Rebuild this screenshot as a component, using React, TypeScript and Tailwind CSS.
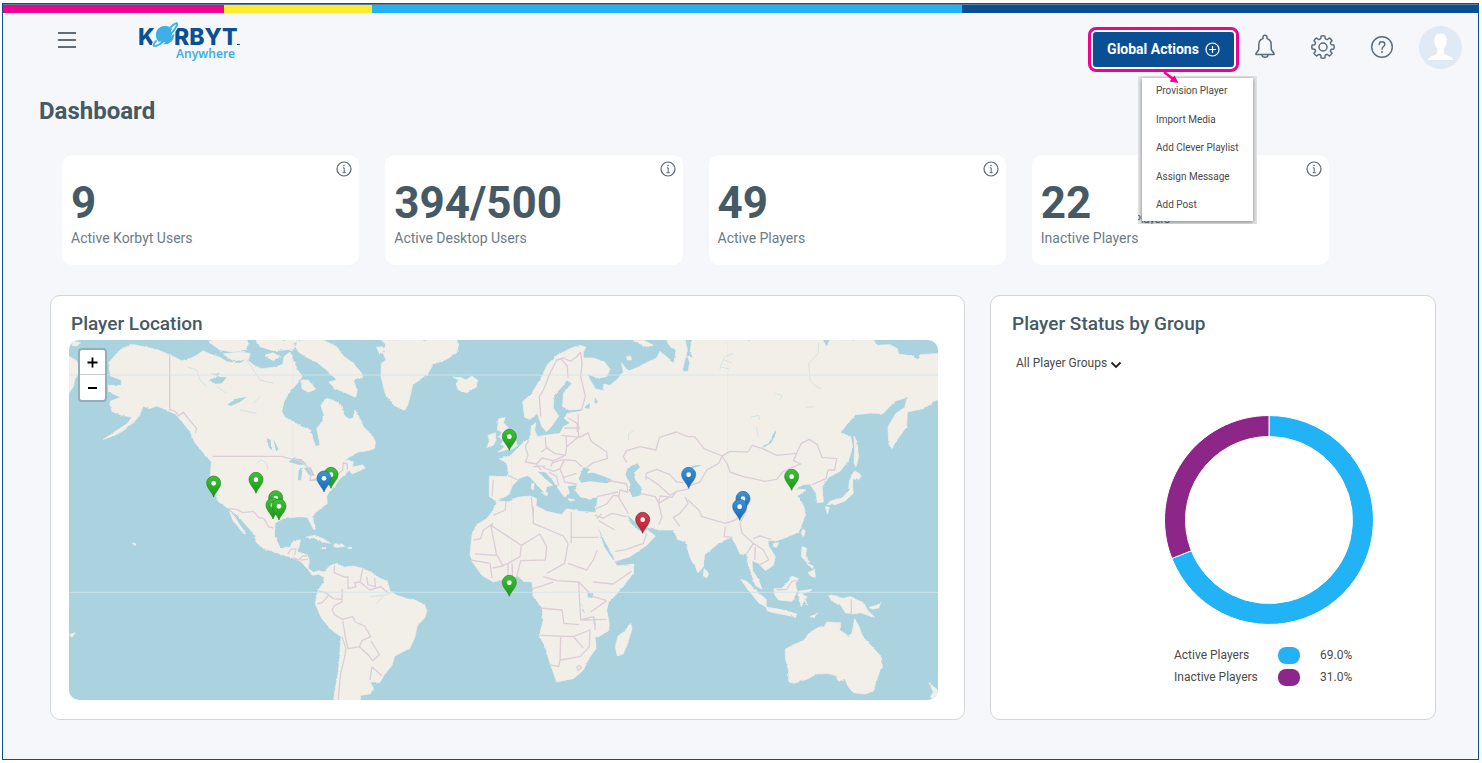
import React from "react";

const ACTIONS = ["Provision Player", "Import Media", "Add Clever Playlist", "Assign Message", "Add Post"];

const STATS = [
  { value: "9", label: "Active Korbyt Users" },
  { value: "394/500", label: "Active Desktop Users" },
  { value: "49", label: "Active Players" },
  { value: "22", label: "Inactive Players" },
];

const GROUPS = [
  { label: "Active Players", share: 69, swatch: "bg-[#22b3f6]", color: "#22b3f6" },
  { label: "Inactive Players", share: 31, swatch: "bg-[#8d2689]", color: "#8d2689" },
];

const PINS: { x: number; y: number; kind: "green" | "blue" | "red" }[] = [
  { x: 461, y: 501, kind: "green" },
  { x: 588, y: 490, kind: "green" },
  { x: 647, y: 545, kind: "green" },
  { x: 639, y: 567, kind: "green" },
  { x: 657, y: 570, kind: "green" },
  { x: 813, y: 475, kind: "green" },
  { x: 792, y: 486, kind: "blue" },
  { x: 1348, y: 361, kind: "green" },
  { x: 1348, y: 799, kind: "green" },
  { x: 1748, y: 610, kind: "red" },
  { x: 1886, y: 475, kind: "blue" },
  { x: 2049, y: 547, kind: "blue" },
  { x: 2039, y: 571, kind: "blue" },
  { x: 2195, y: 481, kind: "green" },
];

const LAND = [
  // North and Central America
  "M145 100L160 82L180 60L215 42L240 48L262 52L300 62L330 75L365 92L395 84L412 74L430 62L450 72L480 82L500 95L540 100L560 88L580 105L605 116L640 112L668 104L672 80L690 66L700 92L712 118L726 140L712 160L690 185L672 215L665 245L675 262L700 276L725 290L752 300L758 325L768 350L780 345L775 318L770 295L788 275L790 248L782 225L800 205L822 212L842 224L852 255L866 268L880 264L885 240L898 262L910 290L936 316L946 335L944 355L925 362L895 366L872 378L850 395L866 390L880 398L876 412L905 405L916 414L895 424L876 432L868 420L856 432L838 448L830 460L822 474L806 486L800 500L802 520L784 534L768 546L757 560L762 580L768 594L760 598L752 580L742 562L720 560L700 562L668 566L645 580L643 618L660 652L690 652L700 632L722 630L712 665L742 675L748 690L744 715L760 727L776 722L790 726L792 742L776 732L758 736L742 716L722 694L692 682L650 668L610 655L588 636L586 616L564 592L545 570L532 556L506 536L476 516L460 476L450 440L455 396L430 368L405 338L388 302L370 280L346 252L320 240L290 228L268 236L250 228L236 262L214 282L190 302L160 318L130 328L160 308L200 282L216 262L184 256L155 244L150 214L182 202L146 186L144 166L184 166L184 150L152 138Z",
  // Arctic archipelago
  "M445 30L455 42L480 60L520 66L556 60L566 40L560 30Z",
  "M490 72L520 92L566 88L570 70L540 66Z",
  "M590 30L600 50L640 62L700 58L716 30Z",
  "M612 76L640 92L660 80L640 68Z",
  "M700 40L730 30L790 30L830 50L850 78L880 100L905 130L908 142L880 152L892 180L886 202L860 190L826 176L806 156L830 150L800 120L770 96L740 82L716 66Z",
  "M724 150L745 150L768 178L744 186L726 176Z",
  // Greenland
  "M965 30L978 44L968 66L978 90L964 100L963 140L975 190L1000 225L1035 242L1045 220L1058 165L1104 130L1120 102L1160 88L1190 68L1196 44L1190 30Z",
  // Iceland
  "M1180 142L1196 150L1188 162L1195 180L1220 188L1248 172L1252 152L1236 138L1218 150L1200 142Z",
  // South America
  "M790 728L810 707L832 700L850 712L880 708L910 716L936 728L960 745L982 754L990 782L1010 796L1040 806L1066 810L1094 826L1101 842L1094 864L1072 886L1065 920L1050 955L1004 978L996 1006L972 1036L960 1057L930 1055L941 1075L930 1092L902 1096L900 1115L820 1115L826 1075L836 1020L843 920L815 900L785 865L766 822L770 796L776 778L792 756Z",
  // British Isles
  "M1316 266L1336 262L1330 278L1342 290L1350 312L1364 332L1372 346L1358 356L1340 360L1316 366L1334 350L1322 342L1334 332L1318 322L1326 306L1312 300Z",
  "M1284 316L1306 308L1308 330L1300 346L1280 352L1288 334Z",
  // Europe and Asia
  "M1560 46L1578 52L1570 66L1570 84L1600 84L1634 96L1650 118L1640 140L1612 144L1584 132L1588 146L1606 176L1628 182L1632 162L1650 166L1672 148L1690 126L1684 98L1704 124L1738 110L1768 94L1790 84L1800 64L1824 84L1842 100L1848 60L1826 44L1820 30L1876 30L1882 60L1872 100L1866 126L1884 124L1890 96L1880 78L1900 84L1890 66L1896 30L2288 30L2300 50L2310 30L2440 30L2450 46L2490 44L2512 56L2516 72L2560 78L2574 90L2580 74L2645 70L2645 200L2590 236L2542 246L2540 290L2512 328L2495 356L2486 340L2484 290L2508 250L2534 232L2542 202L2504 214L2470 250L2430 250L2386 254L2340 308L2372 320L2378 350L2366 390L2340 424L2306 442L2286 470L2288 490L2290 516L2272 518L2268 490L2250 462L2230 464L2204 476L2238 480L2212 498L2232 530L2236 556L2216 606L2180 622L2150 632L2124 632L2126 648L2146 680L2140 706L2116 722L2096 700L2076 692L2078 722L2096 750L2106 778L2086 766L2076 736L2064 700L2060 670L2040 672L2028 644L2014 622L1980 636L1934 674L1930 710L1914 728L1892 686L1876 636L1852 628L1842 600L1800 600L1770 594L1746 586L1722 572L1700 552L1712 580L1740 604L1762 600L1786 618L1760 646L1710 680L1666 694L1650 660L1628 620L1606 574L1608 540L1614 500L1590 508L1560 500L1546 480L1552 464L1522 468L1528 490L1514 502L1496 478L1478 450L1456 426L1432 424L1450 442L1478 466L1460 470L1456 490L1444 478L1420 452L1406 436L1380 444L1358 466L1346 494L1310 514L1288 500L1288 438L1340 440L1346 428L1340 400L1320 386L1350 378L1376 352L1392 336L1412 326L1414 288L1428 278L1424 300L1432 320L1456 316L1500 310L1510 290L1530 280L1512 264L1524 250L1560 244L1574 236L1530 240L1508 230L1510 190L1536 160L1520 150L1508 168L1482 196L1480 234L1496 258L1478 284L1460 306L1446 290L1432 250L1410 268L1394 262L1388 215L1416 190L1444 142L1462 104L1490 76L1530 56Z",
  // Africa
  "M1310 512L1346 516L1372 502L1410 498L1430 506L1428 528L1460 544L1504 554L1520 536L1560 544L1610 548L1606 570L1616 600L1632 650L1652 680L1672 708L1722 702L1720 730L1672 790L1646 816L1640 840L1648 880L1646 902L1606 926L1608 956L1590 980L1570 1020L1540 1046L1490 1056L1470 1000L1456 952L1438 916L1450 870L1446 832L1420 800L1416 756L1392 754L1372 738L1300 756L1266 736L1240 700L1230 674L1236 614L1250 584L1280 566L1300 540Z",
  // Madagascar
  "M1712 880L1716 896L1704 936L1690 972L1672 978L1666 950L1674 918L1694 904Z",
  // Sumatra, Java, Borneo, Sulawesi, Papua
  "M2042 748L2060 754L2090 784L2118 808L2120 832L2096 818L2068 784Z",
  "M2118 832L2160 838L2210 852L2206 860L2150 850L2122 842Z",
  "M2142 776L2164 776L2184 756L2196 738L2216 746L2206 760L2212 784L2196 814L2156 810L2144 794Z",
  "M2216 784L2256 778L2250 784L2226 792L2242 800L2234 806L2244 826L2232 812L2224 830L2218 812Z",
  "M2304 794L2330 798L2346 806L2370 800L2410 818L2424 842L2444 862L2400 848L2380 852L2356 848L2340 822L2318 816Z",
  "M2428 832L2450 826L2462 818L2456 834L2434 838Z",
  "M2250 860L2272 850L2262 862Z",
  // Philippines, Taiwan, Hainan, Sri Lanka
  "M2226 650L2240 654L2236 680L2250 694L2244 700L2224 680Z",
  "M2244 728L2264 718L2266 742L2252 738Z",
  "M2240 700L2260 708L2258 716Z",
  "M2228 598L2236 602L2230 622L2224 610Z",
  "M2140 640L2156 638L2150 652L2140 650Z",
  "M1932 716L1946 728L1940 744L1930 738Z",
  // Japan and Sakhalin
  "M2384 422L2406 436L2394 450L2378 446L2378 470L2380 490L2356 512L2326 524L2302 524L2310 514L2346 504L2366 482L2368 452Z",
  "M2296 530L2308 532L2302 550Z",
  "M2382 318L2390 334L2396 380L2388 410L2382 400L2384 360Z",
  // Australia and New Zealand
  "M2176 958L2200 944L2234 930L2246 910L2276 892L2294 888L2300 876L2342 878L2338 900L2366 918L2376 910L2384 866L2398 892L2408 920L2432 946L2462 978L2464 1010L2450 1050L2440 1084L2414 1092L2380 1088L2366 1072L2354 1046L2336 1054L2326 1036L2300 1030L2270 1032L2240 1048L2202 1060L2186 1054L2186 1024L2176 984Z",
  "M2606 1056L2620 1070L2645 1088L2645 1096L2620 1110L2612 1100L2620 1086Z",
  // Caribbean, Baja California, western edge, small islands
  "M738 622L764 616L790 626L812 640L786 636L764 624Z",
  "M822 642L846 642L856 650L826 652Z",
  "M786 652L798 652L796 656L786 656Z",
  "M864 652L876 652L874 656L864 656Z",
  "M508 544L520 552L536 580L558 612L548 608L530 584L520 574Z",
  "M15 72L50 92L60 120L44 150L40 170L15 206Z",
  "M40 34L62 38L50 48L36 46Z",
  "M220 638L228 642L224 648Z",
  "M28 915L46 908L36 922Z",
  "M1414 462L1422 460L1420 480L1414 476Z",
  "M1444 488L1464 488L1460 498Z",
  "M1524 506L1544 510L1530 514Z",
  "M1700 80L1712 78L1714 90L1702 90Z",
  "M1720 32L1750 30L1780 46L1760 50Z",
  "M950 52L968 50L976 66L958 72Z",
];

const LAKES = [
  "M1570 412L1590 418L1580 430L1600 428L1636 440L1658 452L1640 460L1590 454L1564 458L1556 446Z",
  "M1702 416L1732 400L1740 412L1722 428L1726 450L1744 472L1742 496L1720 502L1706 480L1712 462L1696 436Z",
  "M1580 224L1590 218L1588 236L1574 234Z",
  "M1604 202L1614 216L1606 222Z",
  "M2104 350L2126 340L2146 300L2148 312L2134 338L2112 352Z",
  "M1892 408L1924 404L1924 408L1896 414Z",
  "M686 396L700 384L726 388L740 404L716 404Z",
  "M716 420L728 412L724 446L714 452Z",
  "M732 414L752 412L764 438L748 436Z",
  "M748 452L770 444L772 452Z",
  "M504 222L530 206L560 200L540 216L512 228Z",
  "M450 150L470 140L500 142L486 160L462 162Z",
  "M450 128L466 132L480 128L472 138Z",
  "M620 324L632 330L634 362L626 350Z",
  "M640 328L656 358L648 362Z",
  "M1582 790L1600 790L1598 804L1584 802Z",
  "M1564 816L1570 840L1576 850L1568 844Z",
  "M1602 856L1608 888L1602 886Z",
  "M760 150L768 168L758 166Z",
];

const BORDERS = [
  "M329 75V238L346 244L356 258L370 246L388 270L410 296L406 310",
  "M458 379H664L690 386L720 392L742 410L754 428L750 452L790 440L830 436L848 420L850 398L862 402L862 420",
  "M502 536L530 538L548 548L580 544L596 562L612 566L626 590L640 594",
  "M684 672L692 658L708 656L704 674M700 682L716 690L728 678L742 678M722 690L744 688",
  "M824 706L822 728L856 742L864 740L864 776L888 770L884 758L900 756L930 780L962 770L986 790",
  "M776 782L800 790L806 796L786 818L772 822M806 794L820 806L846 808M846 776L846 816L824 826L816 840L826 856L848 868L878 860L886 876L914 888L932 920L906 932L898 950L864 956L856 920L848 872",
  "M846 920L858 956L852 990L842 1030L834 1112M898 950L926 976L938 992L958 974L950 960L932 932M936 1010L966 1038M936 1010L930 1050M908 716L900 756M920 740L924 764L946 770L944 744",
  "M1562 66L1550 80L1532 94L1510 84L1490 90L1470 130L1450 180L1438 200L1442 260M1502 86L1522 108L1524 144M1562 66L1566 100L1562 140L1576 200L1564 242",
  "M1456 322L1458 350L1466 356M1406 332L1396 350L1404 376L1396 396L1430 402L1446 384L1480 392L1516 376L1520 350L1518 316M1444 366L1460 354L1484 370L1516 376M1504 316L1560 322L1584 308L1594 334L1640 366L1642 386L1600 398L1580 412M1524 264L1552 280L1552 306M1514 294L1560 294M1554 252L1556 320L1520 350M1344 436L1374 450M1300 450L1296 500",
  "M1476 400L1500 390L1520 390L1546 392L1566 410M1448 412L1480 424L1500 416L1510 442L1550 430M1500 416L1512 392M1466 426L1490 440L1496 466M1510 442L1514 456L1550 462M1420 410L1456 408M1430 404L1444 420M1480 392L1472 410",
  "M1640 450L1700 462L1704 486L1680 480L1676 502L1706 552M1608 536L1640 522L1660 496L1676 498M1604 556L1630 564L1656 550L1700 560M1674 486L1610 500",
  "M1700 398L1690 380L1700 362L1740 350L1788 360L1798 322L1850 306L1882 320L1904 320L1932 356L1986 378L2010 364L2064 366L2076 346L2108 356L2150 376L2210 370L2200 392L2222 402L2196 412L2168 426L2150 448L2114 454L2080 446L2050 440L2010 426L2002 402L1986 378L1976 400L1940 420L1920 456L1882 470",
  "M2210 370L2224 340L2248 328L2272 344L2286 382L2330 386L2324 420L2304 420L2298 446L2256 464",
  "M1758 450V430L1790 418L1830 434L1850 456L1870 458M1758 440L1790 460L1830 496L1850 484L1890 476M1850 484L1836 502L1800 498L1796 520L1830 500M1740 490L1786 500L1796 520L1806 562L1796 584M1876 500L1884 520L1858 552L1840 562L1860 590M1884 510L1916 540L1926 560L1996 580L2026 570L2060 540",
  "M1996 590L1992 620L2018 622M2060 540L2040 580L2046 610L2080 640L2060 670M2080 625L2100 618L2134 628M2080 640L2110 660L2126 690L2100 704M2086 650L2084 690",
  "M1616 572L1664 600M1616 622H1534M1534 546V640M1420 530V580L1510 618L1524 640M1384 646L1290 584M1292 584L1310 676L1246 672M1384 646L1380 680L1344 700L1320 710L1298 714M1384 646L1440 612L1460 650L1456 690L1382 692L1370 740M1524 640L1514 700L1460 730M1312 676L1330 710M1344 700V738M1356 700L1358 738M1232 690L1290 700L1296 744M1524 700L1580 720L1600 690L1612 660M1450 740L1490 752L1556 756L1600 800L1640 812M1600 756L1660 762L1714 724M1556 756L1562 870L1600 860L1606 900M1440 834L1506 840L1512 880L1556 884M1440 916L1540 920L1590 900L1588 950L1560 980L1500 990L1496 1010L1466 1004M1502 920L1500 990M1540 920L1570 954M1562 870L1640 868M1416 776L1440 770L1480 756M1592 846L1640 812M1240 630L1262 626L1270 600L1300 580M1550 1012L1558 1006L1564 1014L1554 1022Z",
  "M1300 556L1336 540L1338 516M1414 502L1420 560M1666 664L1700 658L1750 640L1760 610M1610 566L1624 552",
  "M2374 808V852M2150 780L2180 778L2196 754L2210 752",
];

const RIVERS = [
  "M2276 36L2274 70L2246 100L2250 150L2266 168L2284 176",
  "M2020 70L1996 80L1984 100L1980 120M1990 90L2016 98M1986 112L2006 116",
  "M2072 262L2096 256L2098 270M2090 290L2094 320",
  "M380 110L410 120L420 150L440 170",
  "M930 800L980 794L1004 784M950 820L970 798",
  "M1706 330L1706 312L1722 300",
  "M560 90L600 150L640 160M600 200L580 220M540 240L590 250M470 170L500 190",
  "M2144 190L2166 196L2160 210M2236 232L2262 230",
  "M590 400L604 390L620 400L624 420",
];

const PIN_FILL = { green: "url(#pin-green)", blue: "url(#pin-blue)", red: "url(#pin-red)" };
const PIN_STROKE = { green: "#2c7d22", blue: "#2467a3", red: "#6d2a2a" };

function WorldMap() {
  return (
    <svg viewBox="27 30 2607 1080" className="block h-auto w-full" role="img" aria-label="World map with player locations">
      <defs>
        <filter id="coast" x="-5%" y="-5%" width="110%" height="110%">
          <feTurbulence type="fractalNoise" baseFrequency="0.07" numOctaves="2" seed="4" result="n" />
          <feDisplacementMap in="SourceGraphic" in2="n" scale="7" xChannelSelector="R" yChannelSelector="G" />
        </filter>
        <linearGradient id="pin-green" x1="0" y1="0" x2="0" y2="1">
          <stop offset="0" stopColor="#3fc03a" />
          <stop offset="1" stopColor="#169a12" />
        </linearGradient>
        <linearGradient id="pin-blue" x1="0" y1="0" x2="0" y2="1">
          <stop offset="0" stopColor="#4293d2" />
          <stop offset="1" stopColor="#1268bd" />
        </linearGradient>
        <linearGradient id="pin-red" x1="0" y1="0" x2="0" y2="1">
          <stop offset="0" stopColor="#c9405a" />
          <stop offset="1" stopColor="#cc1530" />
        </linearGradient>
      </defs>
      <rect x="27" y="30" width="2607" height="1080" fill="#aad3df" />
      <g filter="url(#coast)">
        <path d={LAND.join("")} fill="#f2efe9" stroke="#f2efe9" strokeWidth="2" strokeLinejoin="round" />
        <path d={LAKES.join("")} fill="#aad3df" />
      </g>
      <path d={RIVERS.join("")} fill="none" stroke="#d3e3e5" strokeWidth="3" strokeLinejoin="round" />
      <path d={BORDERS.join("")} fill="none" stroke="#ddcdd9" strokeWidth="4" strokeLinejoin="round" />
      <path d="M27 135H2634M27 787H2634" stroke="#d2e6ec" strokeOpacity=".8" strokeWidth="3" />
      <path d="M698 30V1110M1355 30V1110M2003 30V1110" stroke="#b4d8e2" strokeOpacity=".25" strokeWidth="2" />
      {PINS.map((p) => (
        <g key={`${p.x}-${p.y}`} transform={`translate(${p.x} ${p.y})`}>
          <path
            d="M0 0C-4 -14 -21 -26 -21 -42A21 21 0 0 1 21 -42C21 -26 4 -14 0 0Z"
            fill={PIN_FILL[p.kind]}
            stroke={PIN_STROKE[p.kind]}
            strokeWidth="2"
          />
          <circle cy="-41" r="7" fill="#fff" />
        </g>
      ))}
    </svg>
  );
}

function Logo() {
  return (
    <svg width="104" height="40" viewBox="0 0 104 40" role="img" aria-label="Korbyt Anywhere">
      <g fontFamily="Inter, sans-serif" fontWeight="800" fontSize="23" fill="#0b5094">
        <text x="-1" y="24">K</text>
        <text x="35" y="24">RBYT</text>
      </g>
      <circle cx="26" cy="14" r="9.200" fill="#3fb0e6" />
      <path d="M32 6C36 2 39 1 38 4C36 9 28 18 21 23C14 27 13 25 17 20" fill="none" stroke="#f5f7fb" strokeWidth="4" />
      <circle cx="25" cy="13.500" r="7.800" fill="#3fb0e6" />
      <path d="M32 6C36 2 39 1 38 4C36 9 28 18 21 23C14 27 13 25 17 20" fill="none" stroke="#3fb0e6" strokeWidth="2" strokeLinecap="round" />
      <path d="M98 23.500h3" stroke="#0b5094" strokeWidth="1" />
      <text x="37" y="37" fontFamily="'Noto Sans', sans-serif" fontWeight="600" fontSize="12" fill="#3fb0e6">Anywhere</text>
    </svg>
  );
}

function InfoIcon() {
  return (
    <svg width="16" height="16" viewBox="0 0 16 16" fill="none" stroke="#566573" strokeWidth="1.200">
      <circle cx="8" cy="8" r="7" />
      <path d="M6.800 6.800H8.200V11.500M6.600 11.700H9.800" strokeWidth="1" />
      <circle cx="8" cy="4.500" r=".8" fill="#566573" stroke="none" />
    </svg>
  );
}

function BellIcon() {
  return (
    <svg width="22" height="26" viewBox="0 0 22 26" fill="none" stroke="#5a6b7b" strokeWidth="1.500" strokeLinejoin="round">
      <path d="M9 4.500V3.200a2 2 0 0 1 4 0V4.500C16 5.300 17.200 8 17.200 11V15.500L20 19.500V20.500H2V19.500L4.800 15.500V11C4.800 8 6 5.300 9 4.500Z" />
      <path d="M8 21C8.300 24 13.700 24 14 21" />
    </svg>
  );
}

function GearIcon() {
  const teeth = Array.from({ length: 8 }, (_, i) => {
    const at = (deg: number, r: number) => {
      const a = ((i * 45 + deg - 90) * Math.PI) / 180;
      return `${(13 + r * Math.cos(a)).toFixed(2)} ${(13 + r * Math.sin(a)).toFixed(2)}`;
    };
    return `${i === 0 ? "M" : "L"}${at(-10, 11)}Q${at(0, 11.600)} ${at(10, 11)}L${at(14, 8.800)}Q${at(22.500, 7.800)} ${at(31, 8.800)}`;
  }).join("");
  return (
    <svg width="26" height="26" viewBox="0 0 26 26" fill="none" stroke="#5a6b7b" strokeWidth="1.500" strokeLinejoin="round">
      <path d={`${teeth}Z`} />
      <circle cx="13" cy="13" r="4" />
    </svg>
  );
}

function HelpIcon() {
  return (
    <svg width="24" height="24" viewBox="0 0 24 24" fill="none" stroke="#5a6b7b" strokeWidth="1.400" strokeLinecap="round">
      <circle cx="12" cy="12" r="10.300" />
      <path d="M9.200 9.500C9.300 5.800 14.800 6 14.800 9.300C14.800 11.600 12 11.500 12 14.300" />
      <circle cx="12" cy="17" r=".9" fill="#5a6b7b" stroke="none" />
    </svg>
  );
}

function Donut() {
  const at = (share: number, r: number) => {
    const a = (share / 100) * 2 * Math.PI;
    return `${(105 + r * Math.sin(a)).toFixed(2)} ${(105 - r * Math.cos(a)).toFixed(2)}`;
  };
  let start = 0;
  return (
    <svg width="210" height="210" viewBox="0 0 210 210" role="img" aria-label="Share of active and inactive players">
      {GROUPS.map((g) => {
        const from = start;
        const to = start + g.share;
        const large = g.share > 50 ? 1 : 0;
        start = to;
        return (
          <path
            key={g.label}
            d={`M${at(from, 104.500)}A104.500 104.500 0 ${large} 1 ${at(to, 104.500)}L${at(to, 83.500)}A83.500 83.500 0 ${large} 0 ${at(from, 83.500)}Z`}
            fill={g.color}
            stroke="#fff"
          />
        );
      })}
    </svg>
  );
}

export default function App() {
  return (
    <div className="flex min-h-screen flex-col bg-white pt-[3px] pr-[3px] pb-[3px] pl-[2px] font-['Roboto',sans-serif]">
      <div className="flex grow flex-col border border-[#0a4f94] bg-[#f5f7fb]">
        <div className="flex h-[9px] border-t border-[#5d7f9f]">
          <div className="w-[15%] bg-[#ee0290]" />
          <div className="w-[10%] bg-[#fdec2c]" />
          <div className="w-[40%] bg-[#22b3f6]" />
          <div className="w-[35%] bg-[#0a4f94]" />
        </div>

        <header className="flex h-[70px] items-start pr-[16px] pl-[55px]">
          <button type="button" aria-label="Open menu" className="mt-[19px] flex w-[18px] flex-col gap-[5px]">
            <span className="h-[2px] bg-[#5f6d7b]" />
            <span className="h-[2px] bg-[#5f6d7b]" />
            <span className="h-[2px] bg-[#5f6d7b]" />
          </button>
          <a href="#home" className="mt-[8px] ml-[63px]">
            <Logo />
          </a>

          <div className="ml-auto flex items-start">
            <div className="relative mt-[14px] rounded-[8px] border-[3px] border-[#ee0290] bg-white p-[2px]">
              <button
                type="button"
                aria-haspopup="menu"
                aria-expanded="true"
                className="flex h-[35px] w-[141px] items-center justify-center gap-[6px] rounded-[3px] bg-[#0a4f94] text-[14px] font-bold text-white"
              >
                Global Actions
                <svg width="15" height="15" viewBox="0 0 15 15" fill="none" stroke="#fff" strokeWidth="1.200">
                  <circle cx="7.500" cy="7.500" r="6.500" />
                  <path d="M7.500 4v7M4 7.500h7" />
                </svg>
              </button>
              <div className="absolute top-[46px] left-[47px] h-[148px] w-[119px] overflow-hidden bg-[#e2e4e6] p-[4px] pt-[2px]">
                <span aria-hidden="true" className="absolute bottom-[-2px] left-[-4px] text-[11px] leading-[13px] text-[#566573]">Players</span>
                <ul role="menu" className="relative flex h-[143px] flex-col bg-white text-[10px] leading-[13px] text-[#4a4a4a] shadow-[0_1px_4px_rgba(0,0,0,0.45)]">
                  {ACTIONS.map((a) => (
                    <li key={a} role="none" className="flex flex-1 items-start pt-[6px] pl-[14px]">
                      <button role="menuitem" type="button" className="whitespace-nowrap">{a}</button>
                    </li>
                  ))}
                </ul>
              </div>
              <svg width="18" height="14" viewBox="0 0 18 14" className="absolute top-[41px] left-[72px]">
                <path d="M1 1L10 8" stroke="#ee0290" strokeWidth="2.500" />
                <path d="M15.500 12L6.500 10.500L11.500 4.500Z" fill="#ee0290" />
              </svg>
            </div>
            <button type="button" aria-label="Notifications" className="mt-[21px] ml-[15px]"><BellIcon /></button>
            <button type="button" aria-label="Settings" className="mt-[21px] ml-[34px]"><GearIcon /></button>
            <button type="button" aria-label="Help" className="mt-[22px] ml-[34px]"><HelpIcon /></button>
            <button type="button" aria-label="Account" className="mt-[13px] ml-[25px]">
              <svg width="43" height="43" viewBox="0 0 43 43">
                <circle cx="21.500" cy="21.500" r="21.500" fill="#dfeaf2" />
                <path d="M21.500 7.500C26 7.500 28 10.500 27.700 15C27.500 19 26 21 24.800 22.500V27C26 29.500 33 29.500 34.500 34H8.500C10 29.500 17 29.500 18.200 27V22.500C17 21 15.500 19 15.300 15C15 10.500 17 7.500 21.500 7.500Z" fill="#fff" />
              </svg>
            </button>
          </div>
        </header>

        <main className="flex flex-col">
          <h1 className="pt-[13px] pl-[36px] text-[24px] leading-[30px] font-bold text-[#455a64]">Dashboard</h1>

          <section className="mt-[29px] grid grid-cols-4 gap-[26px] pr-[149px] pl-[59px]">
            {STATS.map((s) => (
              <article key={s.label} className="flex h-[110px] justify-between rounded-[10px] bg-white pr-[7px] pl-[9px]">
                <div className="pt-[23px]">
                  <p className="text-[44px] leading-[50px] font-bold text-[#455a64]">{s.value}</p>
                  <p className="text-[14px] leading-[20px] text-[#6b7c86]">{s.label}</p>
                </div>
                <button type="button" aria-label={`About ${s.label}`} className="mt-[6px] h-[16px]"><InfoIcon /></button>
              </article>
            ))}
          </section>

          <section className="mt-[30px] grid grid-cols-[915fr_446fr] gap-[25px] pr-[42px] pb-[38px] pl-[47px]">
            <article className="rounded-[10px] border border-[#d3d6d9] bg-white pt-[16px] pr-[26px] pb-[19px] pl-[18px]">
              <h2 className="pl-[2px] text-[19px] leading-[24px] font-medium text-[#455a64]">Player Location</h2>
              <div className="relative mt-[4px] overflow-hidden rounded-[10px]">
                <WorldMap />
                <div className="absolute top-[8px] left-[9px] flex w-[29px] flex-col rounded-[4px] border-2 border-[#8fb0ba] bg-white text-black">
                  <button type="button" aria-label="Zoom in" className="flex h-[25px] items-center justify-center border-b border-[#ccc]">
                    <svg width="11" height="11" viewBox="0 0 11 11" stroke="#000" strokeWidth="1.800"><path d="M5.500 0.500v10M0.500 5.500h10" /></svg>
                  </button>
                  <button type="button" aria-label="Zoom out" className="flex h-[25px] items-center justify-center">
                    <svg width="9" height="4" viewBox="0 0 9 4" stroke="#000" strokeWidth="1.800"><path d="M0 2h9" /></svg>
                  </button>
                </div>
              </div>
            </article>

            <article className="rounded-[10px] border border-[#d3d6d9] bg-white pt-[16px] pl-[21px]">
              <h2 className="text-[19px] leading-[24px] font-medium text-[#455a64]">Player Status by Group</h2>
              <div className="mt-[18px] flex items-center pl-[4px]">
                <select aria-label="Player group" className="w-[94px] appearance-none bg-transparent text-[12px] leading-[18px] text-[#4a4a4a]">
                  <option>All Player Groups</option>
                </select>
                <svg width="12" height="8" viewBox="0 0 12 8" fill="none" stroke="#222" strokeWidth="1.800" className="mt-[3px]"><path d="M1.500 1.500L6 6L10.500 1.500" /></svg>
              </div>
              <div className="mt-[43px] pl-[152px]"><Donut /></div>
              <table className="mt-[19px] ml-[162px] text-left text-[12px] text-[#4a4a4a]">
                <tbody>
                  {GROUPS.map((g) => (
                    <tr key={g.label} className="h-[22px]">
                      <th scope="row" className="w-[104px] font-normal">{g.label}</th>
                      <td className="w-[42px]"><div className={`h-[17px] w-[22px] rounded-[8px] ${g.swatch}`} /></td>
                      <td>{g.share.toFixed(1)}%</td>
                    </tr>
                  ))}
                </tbody>
              </table>
            </article>
          </section>
        </main>
      </div>
    </div>
  );
}
